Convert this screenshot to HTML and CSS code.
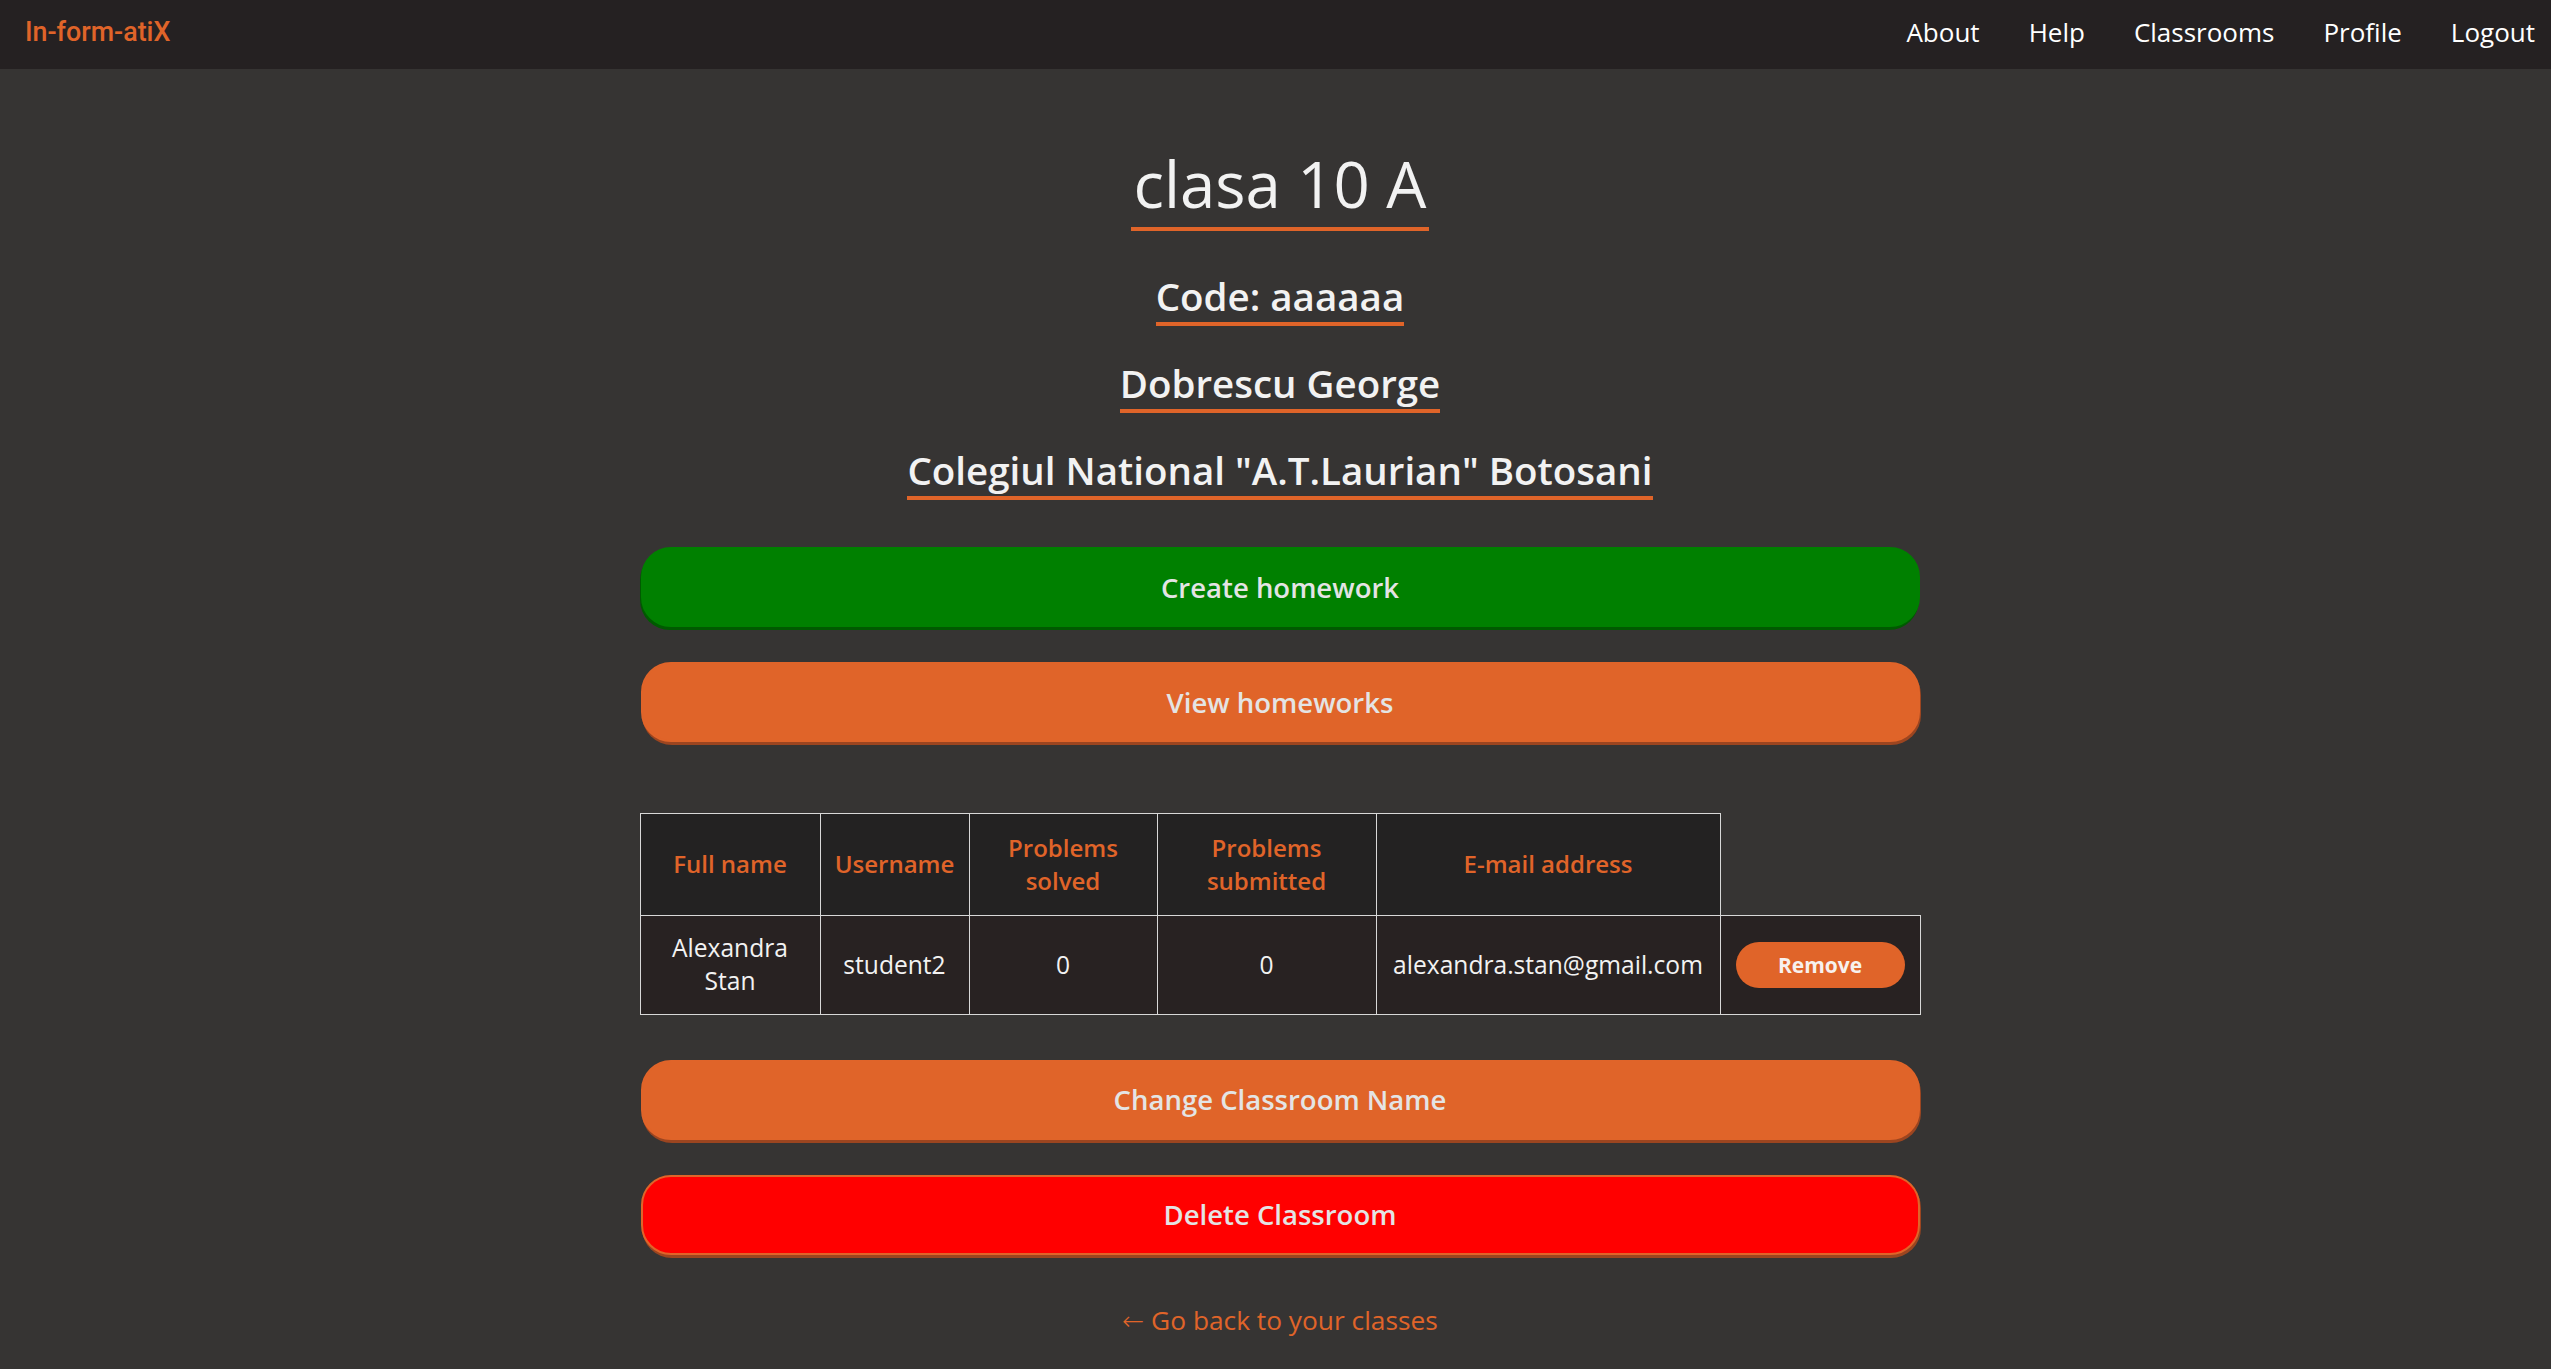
FILE: index.html
```html
<!DOCTYPE html>
<html lang="en">
<head>
<meta charset="utf-8">
<title>clasa 10 A</title>
<link rel="stylesheet" href="styles.css">
</head>
<body>
<nav class="navbar">
  <a class="brand" href="#">In-form-atiX</a>
  <ul class="nav-links">
    <li><a href="#">About</a></li>
    <li><a href="#">Help</a></li>
    <li><a href="#">Classrooms</a></li>
    <li><a href="#">Profile</a></li>
    <li><a href="#">Logout</a></li>
  </ul>
</nav>
<main class="page">
  <h1 class="title">clasa 10 A</h1>
  <h3 class="info first">Code: aaaaaa</h3>
  <h3 class="info">Dobrescu George</h3>
  <h3 class="info">Colegiul National "A.T.Laurian" Botosani</h3>

  <button class="btn btn-green">Create homework</button>
  <button class="btn btn-orange">View homeworks</button>

  <table class="students">
    <colgroup>
      <col class="c-name"><col class="c-user"><col class="c-solved"><col class="c-sub"><col class="c-mail"><col class="c-act">
    </colgroup>
    <thead>
      <tr>
        <th>Full name</th>
        <th>Username</th>
        <th>Problems solved</th>
        <th>Problems submitted</th>
        <th>E-mail address</th>
      </tr>
    </thead>
    <tbody>
      <tr>
        <td>Alexandra Stan</td>
        <td>student2</td>
        <td>0</td>
        <td>0</td>
        <td>alexandra.stan@gmail.com</td>
        <td><button class="remove">Remove</button></td>
      </tr>
    </tbody>
  </table>

  <button class="btn btn-orange btn-change">Change Classroom Name</button>
  <button class="btn btn-red">Delete Classroom</button>

  <a class="back" href="#"><span class="arrow">←</span> Go back to your classes</a>
</main>
</body>
</html>
```

FILE: styles.css
```css
* { box-sizing: border-box; }

html {
  background: #363433;
}

body {
  margin: 0;
  padding: 0;
  background: #363433;
  font-family: "Open Sans", "Noto Sans", sans-serif;
  color: #f2f2f2;
}

.navbar {
  height: 69px;
  background: #252122;
  display: flex;
  align-items: center;
  justify-content: space-between;
  padding: 0 16px 6px 25px;
}

.brand {
  font-family: Roboto, "Liberation Sans", sans-serif;
  font-weight: 500;
  font-size: 26.8px;
  color: #e06429;
  text-decoration: none;
}

.nav-links {
  list-style: none;
  margin: 0;
  padding: 0;
  display: flex;
  gap: 49px;
}

.nav-links a {
  color: #ffffff;
  text-decoration: none;
  font-size: 26px;
}

.page {
  display: flex;
  flex-direction: column;
  align-items: center;
  padding-left: 9px;
}

.title {
  margin: 71px 0 0;
  font-size: 63.5px;
  font-weight: 500;
  line-height: normal;
  color: #f2f2f2;
  border-bottom: 4px solid #e06429;
  padding: 0 2px;
}

.info {
  margin: 31px 0 0;
  font-size: 38.5px;
  font-weight: 600;
  line-height: normal;
  color: #f2f2f2;
  border-bottom: 4px solid #e06429;
}

.info.first { margin-top: 39px; }

.btn {
  width: 1279px;
  height: 80px;
  border-radius: 30px;
  border: 2px solid transparent;
  font-family: "Open Sans", "Noto Sans", sans-serif;
  font-size: 27.5px;
  font-weight: 600;
  color: #e4e4e4;
  cursor: pointer;
  margin-top: 35px;
}

.btn-green {
  margin-top: 47px;
  background: #008000;
  border-color: #008000;
  box-shadow: -1px 3px 0 #005a00;
}

.btn-orange {
  background: #e06429;
  border-color: #e06429;
  box-shadow: 1px 3px 0 #9c4520;
}

.btn-change { margin-top: 45px; }

.btn-red {
  background: #ff0000;
  border-color: #e06429;
  box-shadow: 1px 3px 0 #9c4520;
}

.students {
  margin-top: 71px;
  border-collapse: collapse;
  table-layout: fixed;
  width: 1280px;
  font-size: 24px;
  text-align: center;
}

.c-name { width: 180px; }
.c-user { width: 149px; }
.c-solved { width: 188px; }
.c-sub { width: 219px; }
.c-mail { width: 344px; }
.c-act { width: 200px; }

.students th {
  background: #232222;
  color: #e06429;
  font-weight: 600;
  border: 1px solid #d8d8d8;
  padding: 18px 10px;
  line-height: 1.36;
  vertical-align: middle;
}

.students td {
  background: #282222;
  color: #f2f2f2;
  font-size: 24.6px;
  border: 1px solid #d8d8d8;
  padding: 16px 10px;
  line-height: 1.33;
  vertical-align: middle;
}

.remove {
  width: 169px;
  height: 46px;
  border: none;
  border-radius: 23px;
  background: #e06429;
  color: #f7f1ee;
  font-family: "Open Sans", "Noto Sans", sans-serif;
  font-size: 21px;
  font-weight: 700;
  cursor: pointer;
}

.back {
  margin-top: 47px;
  font-size: 26.3px;
  color: #e06429;
  text-decoration: none;
}

.arrow {
  font-family: "DejaVu Sans", sans-serif;
  font-weight: 300;
}
```
